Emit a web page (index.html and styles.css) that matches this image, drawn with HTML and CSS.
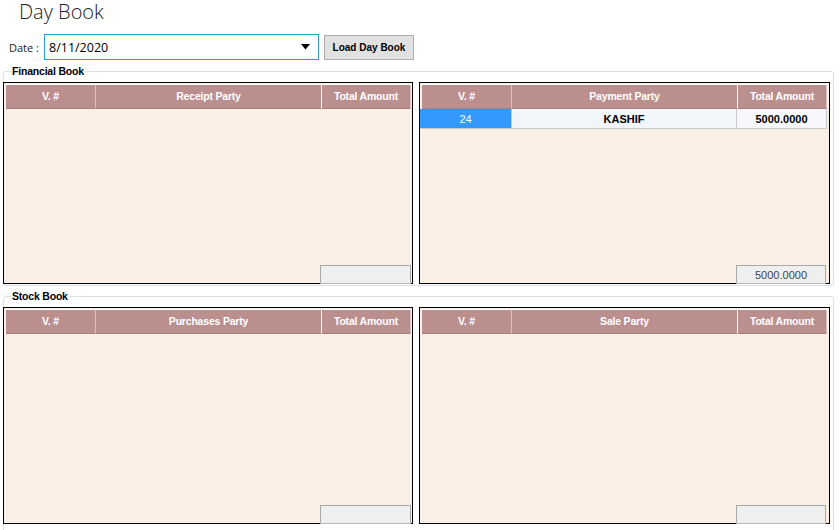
FILE: index.html
```html
<!DOCTYPE html>
<html>
<head>
<meta charset="utf-8">
<link rel="stylesheet" href="styles.css">
</head>
<body>
<div class="title">Day Book</div>
<div class="toolbar">
  <span class="date-label">Date :</span>
  <div class="combo">
    <span class="combo-text">8/11/2020</span>
    <svg class="combo-arrow" width="9" height="6" viewBox="0 0 9 6"><path d="M0 0H9L4.5 5.5Z" fill="#000"/></svg>
  </div>
  <button class="btn">Load Day Book</button>
</div>

<div class="group group-fin">
  <span class="legend">Financial Book</span>
  <div class="panels">
    <div class="panel">
      <div class="grid-head">
        <div class="hc c1">V. #</div>
        <div class="hc c2">Receipt Party</div>
        <div class="hc c3">Total Amount</div>
      </div>
      <div class="grid-body"></div>
      <div class="foot"><div class="sum"></div></div>
    </div>
    <div class="panel panel-r">
      <div class="grid-head">
        <div class="hc c1">V. #</div>
        <div class="hc c2">Payment Party</div>
        <div class="hc c3">Total Amount</div>
      </div>
      <div class="grid-body">
        <div class="row">
          <div class="dc c1 sel">24</div>
          <div class="dc c2 name">KASHIF</div>
          <div class="dc c3 amt">5000.0000</div>
        </div>
      </div>
      <div class="foot"><div class="sum sum-r">5000.0000</div></div>
    </div>
  </div>
</div>

<div class="group group-stock">
  <span class="legend">Stock Book</span>
  <div class="panels">
    <div class="panel tall">
      <div class="grid-head">
        <div class="hc c1">V. #</div>
        <div class="hc c2">Purchases Party</div>
        <div class="hc c3">Total Amount</div>
      </div>
      <div class="grid-body"></div>
      <div class="foot"><div class="sum"></div></div>
    </div>
    <div class="panel panel-r tall">
      <div class="grid-head">
        <div class="hc c1">V. #</div>
        <div class="hc c2">Sale Party</div>
        <div class="hc c3">Total Amount</div>
      </div>
      <div class="grid-body"></div>
      <div class="foot"><div class="sum sum-r"></div></div>
    </div>
  </div>
</div>
</body>
</html>
```
FILE: styles.css
```css
* { box-sizing: border-box; }
html, body { margin: 0; padding: 0; background: #fff; }
body {
  width: 840px;
  height: 530px;
  overflow: hidden;
  font-family: "Liberation Sans", Arial, sans-serif;
  color: #000;
}
.title {
  height: 34px;
  padding-left: 19px;
  padding-top: 0;
  font-family: "Open Sans", "Lato", sans-serif;
  font-weight: 300;
  font-size: 20px;
  line-height: 24px;
  color: #222;
}
.toolbar {
  display: flex;
  align-items: center;
  height: 26px;
  padding-left: 9px;
}
.date-label {
  font-family: "Open Sans", sans-serif;
  font-size: 11px;
  width: 35px;
  color: #222;
}
.combo {
  width: 275px;
  height: 26px;
  border: 1px solid #2aa1d6;
  display: flex;
  align-items: center;
  padding-left: 4px;
  padding-right: 8px;
}
.combo-text {
  flex: 1;
  font-family: "Open Sans", sans-serif;
  font-size: 12.5px;
  color: #000;
}
.combo-arrow { display: block; }
.btn {
  margin-left: 5px;
  width: 90px;
  height: 25px;
  margin-top: 1px;
  background: #e1e1e1;
  border: 1px solid #adadad;
  font-family: "Liberation Sans", Arial, sans-serif;
  font-weight: bold;
  font-size: 10px;
  color: #000;
  padding: 0;
}
.group {
  position: relative;
  margin-left: 3px;
  width: 831px;
  border: 1px solid #dcdfe3;
  border-radius: 3px;
  padding: 10px 3px 1px 0;
}
.group-fin { margin-top: 11px; }
.group-stock { margin-top: 10px; height: 240px; }
.legend {
  position: absolute;
  top: -7px;
  left: 7px;
  background: #fff;
  padding: 0 1px;
  font-weight: bold;
  font-size: 10.5px;
  line-height: 12px;
  letter-spacing: -0.2px;
}
.panels {
  display: flex;
  gap: 6px;
  margin-left: -1px;
}
.panel {
  width: 410px;
  height: 202px;
  border: 1px solid #000;
  background: #faf0e6;
  padding: 1px 0 0 1px;
  display: flex;
  flex-direction: column;
}
.panel-r { width: 411px; }
.panel.tall { height: 217px; }
.grid-head {
  display: flex;
  height: 25px;
  border-top: 1px solid #fff;
  padding-left: 1px;
  background: #faf0e6;
}
.hc {
  background: #bc8f8f;
  color: #fff;
  font-weight: bold;
  font-size: 10.5px;
  display: flex;
  align-items: center;
  justify-content: center;
  padding-bottom: 1px;
  border-bottom: 1px solid #a98080;
  letter-spacing: -0.2px;
}
.c1 { width: 90px; border-right: 1px solid #d7c0c0; }
.c2 { width: 226px; border-right: 1px solid #fff; }
.c3 { width: 89px; border-right: 1px solid #d8c4c4; }
.grid-body { flex: 1; }
.row { display: flex; height: 20px; margin-left: -1px; }
.dc {
  display: flex;
  align-items: center;
  justify-content: center;
  font-size: 11px;
  border-bottom: 1px solid #c9c9c9;
}
.dc.c1 { width: 91px; border-right: none; }
.sel { background: #3399ff; color: #fff; }
.name { background: #f1f6fb; font-weight: bold; border-right: 1px solid #c9c9c9; border-left: 1px solid #c9c9c9; }
.amt { background: #f6f8fb; font-weight: bold; border-right: 1px solid #c9c9c9; width: 90px; }
.foot {
  display: flex;
  justify-content: flex-end;
  padding-right: 1px;
  margin-bottom: -1px;
  position: relative;
}
.sum {
  width: 91px;
  height: 19px;
  background: #efefef;
  border: 1px solid #a9a9a9;
  border-bottom-color: #b8b8b8;
  font-size: 11px;
  color: #444;
  display: flex;
  align-items: center;
  justify-content: center;
}
.sum-r { width: 90px; margin-right: 2px; }
```
